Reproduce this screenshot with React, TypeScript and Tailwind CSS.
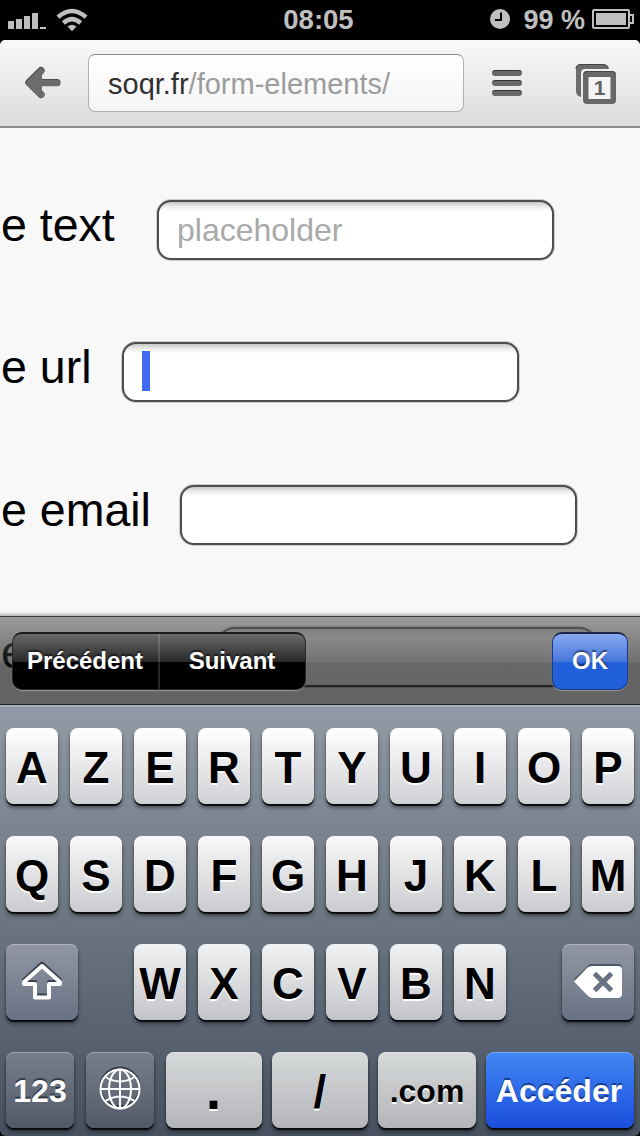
import type { ReactNode } from "react";

const KEY =
  "flex h-[76px] items-center justify-center rounded-[8px] font-bold leading-none shadow-[0_2px_1px_#090b0e,0_4px_4px_rgba(0,0,0,0.4),inset_0_1px_0_rgba(255,255,255,0.3)]";
const WHITE_TEXT = "text-white [text-shadow:0_-2px_0_rgba(30,36,50,0.75)]";
const BLACK_TEXT = "text-black [text-shadow:0_2px_0_#fff]";

function Letter({ char, tone }: { char: string; tone: string }) {
  return (
    <div className={`${KEY} ${BLACK_TEXT} ${tone} w-[52px] pt-[3px] text-[44px]`}>
      {char}
    </div>
  );
}

function Key({ className, children }: { className: string; children: ReactNode }) {
  return <div className={`${KEY} ${className}`}>{children}</div>;
}

function Field({
  label,
  labelWidth,
  boxWidth = "w-[397px] rounded-[14px]",
  children,
}: {
  label: string;
  labelWidth: string;
  boxWidth?: string;
  children?: ReactNode;
}) {
  return (
    <div className="flex h-[142.4px] shrink-0 items-start">
      <div className={`${labelWidth} -mt-px shrink-0 whitespace-pre pl-px text-[46.5px] leading-[52px]`}>{label}</div>
      <div
        className={`${boxWidth} flex h-[60px] shrink-0 items-center border-2 border-[#4d4d4d] bg-white bg-[linear-gradient(#c8c8c8,#eeeeee_5px,#ffffff_9px)] pl-[18px] text-[32px] text-[#a9a9a9] shadow-[0_0_0_1px_rgba(77,77,77,0.25)]`}
      >
        {children}
      </div>
    </div>
  );
}

function StatusBar() {
  return (
    <div className="grid h-10 grid-cols-3 items-center bg-black px-2 text-[27.5px] font-bold leading-none text-[#bfbfbf]">
      <div className="flex items-center gap-[10px]">
        <svg width="38" height="18" viewBox="0 0 38 18" fill="#bfbfbf" className="mt-[2px]">
          <path d="M0 9h6v8H0zM8 7h6v10H8zM16 4h6v13h-6zM24 1h6v16h-6zM32 15h6v2h-6z" />
        </svg>
        <svg width="32" height="24" viewBox="0 0 32 24" fill="none" stroke="#bfbfbf" strokeWidth="4.4" className="-mt-px">
          <path d="M2 9.2Q16-3.2 30 9.2M7.4 15Q16 7.2 24.6 15" />
          <path d="M11.5 18.5Q16 14.8 20.5 18.5L16 23.3Z" fill="#bfbfbf" stroke="none" />
        </svg>
      </div>
      <div className="pr-[3px] text-center">08:05</div>
      <div className="flex items-center justify-end">
        <svg width="20" height="20" viewBox="0 0 20 20" className="mr-[13px] -mt-[2px]">
          <circle cx="10" cy="10" r="10" fill="#bfbfbf" />
          <path d="M11 3.5V11H5" fill="none" stroke="#000" strokeWidth="2" />
        </svg>
        <span className="whitespace-nowrap text-[27px]">99 %</span>
        <svg width="42" height="20" viewBox="0 0 42 20" className="ml-[7px] -mr-[2px] -mt-[2px]">
          <rect x="1" y="1" width="36" height="18" rx="1" fill="none" stroke="#bfbfbf" strokeWidth="2" />
          <rect x="4" y="4" width="30" height="12" fill="#bfbfbf" />
          <path d="M38 6h3v8h-3" fill="none" stroke="#bfbfbf" strokeWidth="2" />
        </svg>
      </div>
    </div>
  );
}

function Toolbar() {
  return (
    <div className="bg-black">
      <div className="flex h-[88px] items-start rounded-t-[5px] border-b-2 border-[#8a8a8a] bg-[linear-gradient(#f9f9f9,#dcdcdc)]">
        <svg width="38" height="34" viewBox="0 0 38 34" className="ml-6 mt-[26px]" fill="none" strokeLinecap="round" strokeLinejoin="round">
          <path d="M17 4.5L4.8 16.5L17 28.5M7 16.5H33" stroke="#3f3f3f" strokeWidth="7" />
          <path d="M17 5.3L5.3 17L17 28.7M7 17H33" stroke="#6c6c6c" strokeWidth="6.6" />
          <path d="M4.5 17L18 5V29Z" fill="#6c6c6c" />
        </svg>
        <div className="ml-[26px] mt-[14px] flex h-[58px] w-[376px] items-center rounded-[7px] border border-[#b0b0b0] border-t-[#888] bg-[linear-gradient(#ffffff,#f5f5f5)] pl-[19px] pt-[3px] text-[29px] leading-none text-[#9c9c9c]">
          <span className="text-[#303030]">soqr.fr</span>/form-elements/
        </div>
        <div className="ml-7 mt-[30px] flex w-[30px] flex-col gap-[4px]">
          <div className="h-[6px] rounded-full border-t border-[#333] bg-[#686868]" />
          <div className="h-[6px] rounded-full border-t border-[#333] bg-[#686868]" />
          <div className="h-[6px] rounded-full border-t border-[#333] bg-[#686868]" />
        </div>
        <svg width="42" height="42" viewBox="0 0 42 42" className="ml-[53px] mt-[23px]">
          <path d="M6 34Q1 33 1 28V6Q1 1 6 1H28Q33 1 34 6H10Q6 6 6 10Z" fill="#6c6c6c" />
          <path d="M1 6Q1 1.5 6 1.5H28Q32 1.5 33 5" fill="none" stroke="#444" strokeWidth="1" />
          <rect x="8" y="8" width="33" height="33" rx="4" fill="#686868" />
          <path d="M8.5 11Q9 8.5 12 8.5H37Q40 8.5 40.5 11" fill="none" stroke="#444" strokeWidth="1" />
          <rect x="13.5" y="14" width="22" height="22" fill="#f4f4f4" />
          <text x="24.5" y="32" textAnchor="middle" fontSize="21" fontWeight="700" fill="#606060">1</text>
        </svg>
      </div>
    </div>
  );
}

function AccessoryBar() {
  return (
    <div className="absolute inset-x-0 bottom-0">
      <div className="h-[4px] bg-[linear-gradient(#f5f5f5,#b5b5b5)]" />
      <div className="flex h-[89px] justify-between border-y border-t-[#3a3a3a] border-b-[#222] bg-[linear-gradient(rgba(100,100,100,0.63),rgba(32,32,32,0.63)_52%,rgba(10,10,10,0.62)_53%,rgba(5,5,5,0.61))] pl-3 pr-3 pt-[15px] text-2xl font-bold leading-none text-white [text-shadow:0_-2px_1px_rgba(0,0,0,0.5)]">
        <div className="flex h-[58px] w-[294px] rounded-[10px] border border-[#252525] border-t-2 border-t-[#191919] bg-[linear-gradient(#6a6a6a,#292929_50%,#000000_51%)] shadow-[0_1px_1px_#999]">
          <div className="flex w-[147px] items-center justify-center border-r-2 border-white/15 pb-[2px] pr-px">Précédent</div>
          <div className="flex flex-1 items-center justify-center pb-[2px] pr-px">Suivant</div>
        </div>
        <div className="flex h-[58px] w-[76px] items-center justify-center rounded-[10px] border border-[#183b86] border-t-2 border-t-[#1c2746] bg-[linear-gradient(#8aaaf2,#4577dc_50%,#225fda_51%)] pb-[2px] shadow-[0_1px_1px_#999]">
          OK
        </div>
      </div>
    </div>
  );
}

function Keyboard() {
  return (
    <div className="bg-black">
      <div className="flex h-[431px] flex-col gap-8 rounded-b-[6px] border-t-2 border-[#aab0bb] bg-[linear-gradient(#9199a7,#68717e_55%,#475160)] px-[6px] pt-[21px]">
        <div className="flex justify-between">
          {"AZERTYUIOP".split("").map((c) => (
            <Letter key={c} char={c} tone="bg-[linear-gradient(#ffffff,#d0d1d5)]" />
          ))}
        </div>
        <div className="flex justify-between">
          {"QSDFGHJKLM".split("").map((c) => (
            <Letter key={c} char={c} tone="bg-[linear-gradient(#f8f8f9,#cbccd0)]" />
          ))}
        </div>
        <div className="flex justify-between">
          <Key className="w-[72px] bg-[linear-gradient(#9197a3,#687284)]">
            <svg width="44" height="42" viewBox="0 0 44 42" fill="none" strokeWidth="4" strokeLinejoin="round">
              <path d="M22 4.5L4 21V23H15V36.5H29V23H40V21Z" stroke="#3b424d" transform="translate(0 -2)" />
              <path d="M22 5L4 21V23H15V36.5H29V23H40V21Z" stroke="#fff" />
            </svg>
          </Key>
          <div className="flex gap-3">
            {"WXCVBN".split("").map((c) => (
              <Letter key={c} char={c} tone="bg-[linear-gradient(#f1f2f3,#c4c5c9)]" />
            ))}
          </div>
          <Key className="w-[72px] bg-[linear-gradient(#9197a3,#687284)]">
            <svg width="50" height="36" viewBox="0 0 50 36">
              <path d="M17 0H45Q49 0 49 4V28H17L1 15Z" fill="#4c5563" />
              <path d="M1 17.5L14 4Q16.5 2 19 2H45Q49 2 49 6V30Q49 34 45 34H19Q16.5 34 14 31Z" fill="#fff" />
              <path d="M21.5 9.5L38.5 26.5M38.5 9.5L21.5 26.5" stroke="#697282" strokeWidth="5" />
            </svg>
          </Key>
        </div>
        <div className="flex text-[32px]">
          <Key className={`w-[68px] bg-[linear-gradient(#777e8b,#525a69)] pt-[2px] ${WHITE_TEXT}`}>123</Key>
          <Key className="ml-3 w-[68px] bg-[linear-gradient(#777e8b,#525a69)]">
            <svg width="44" height="46" viewBox="0 0 44 46" fill="none" className="-mt-[2px]">
              <circle cx="22" cy="21" r="19.5" stroke="#343b47" strokeWidth="2" />
              <g stroke="#fff" strokeWidth="2">
                <circle cx="22" cy="23" r="19.5" />
                <ellipse cx="22" cy="23" rx="11" ry="19.5" />
                <path d="M22 3.5V42.5M2.5 23H41.5M7.5 11Q22 20 36.5 11M7.5 35Q22 26 36.5 35" />
              </g>
            </svg>
          </Key>
          <Key className={`ml-3 w-24 bg-[linear-gradient(#d6d9da,#b4b5b9)] pr-px text-[56px] ${BLACK_TEXT}`}>.</Key>
          <Key className={`ml-[10px] w-24 bg-[linear-gradient(#d6d9da,#b4b5b9)] pt-[3px] text-[46px] ${BLACK_TEXT}`}>/</Key>
          <Key className={`ml-[10px] w-[98px] bg-[linear-gradient(#d6d9da,#b4b5b9)] pt-[2px] ${BLACK_TEXT}`}>.com</Key>
          <Key className="ml-[10px] w-[148px] bg-[linear-gradient(#4387f5,#1a4edb)] pr-[2px] pt-[2px] text-white [text-shadow:0_-2px_0_#193e91]">
            Accéder
          </Key>
        </div>
      </div>
    </div>
  );
}

export default function App() {
  return (
    <div className="flex h-[1136px] w-[640px] flex-col overflow-hidden bg-black font-['Liberation_Sans',Arial,sans-serif] text-black">
      <StatusBar />
      <Toolbar />
      <div className="relative flex h-[577px] shrink-0 flex-col overflow-hidden bg-[#f8f8f8] pt-[72px]">
        <Field label="e text" labelWidth="w-[157px]">placeholder</Field>
        <Field label="e url" labelWidth="w-[122px]">
          <div className="-mt-[2px] h-10 w-2 bg-[#426bf2]" />
        </Field>
        <Field label="e email" labelWidth="w-[180px]" />
        <Field label="e" labelWidth="w-[216px]" boxWidth="w-[382px] rounded-[19px]" />
        <AccessoryBar />
      </div>
      <Keyboard />
    </div>
  );
}
